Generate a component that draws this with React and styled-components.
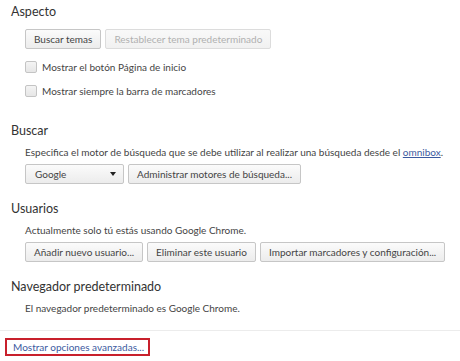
import React from "react";
import styled, { createGlobalStyle } from "styled-components";

const Global = createGlobalStyle`
  html, body { margin: 0; padding: 0; background: #ffffff; }
  body { font-family: Lato, "Open Sans", "Liberation Sans", sans-serif; color: #444; }
`;

const Page = styled.div`
  width: 460px;
  height: 361px;
  overflow: hidden;
  padding-top: 3px;
  box-sizing: border-box;
  display: flex;
  flex-direction: column;
`;

const Section = styled.section`
  padding-left: 11px;
  display: flex;
  flex-direction: column;
  margin-bottom: ${(p) => p.$gap ?? 16}px;
`;

const Title = styled.h3`
  margin: 0;
  font-size: 12.5px;
  font-weight: 400;
  line-height: 18px;
  color: #333;
`;

const Body = styled.div`
  padding-left: 14px;
  display: flex;
  flex-direction: column;
  gap: 3px;
  margin-top: ${(p) => p.$top ?? 3}px;
`;

const Text = styled.div`
  font-size: 10px;
  line-height: 18px;
  color: #444;
  white-space: nowrap;
`;

const Link = styled.a`
  color: #3b5aa0;
  text-decoration: underline;
`;

const Row = styled.div`
  display: flex;
  gap: 4px;
`;

const Button = styled.button`
  height: 20px;
  box-sizing: border-box;
  padding: 0 ${(p) => p.$pad ?? 8}px;
  font-family: inherit;
  font-size: 10px;
  line-height: 18px;
  border-radius: 2px;
  border: 1px solid ${(p) => (p.disabled ? "#dcdcdc" : "#c6c6c6")};
  color: ${(p) => (p.disabled ? "#b0b0b0" : "#444")};
  background: ${(p) =>
    p.disabled
      ? "linear-gradient(#f9f9f9, #f1f1f1)"
      : "linear-gradient(#fbfbfb, #ececec)"};
  white-space: nowrap;
`;

const Select = styled.div`
  width: 99px;
  height: 20px;
  box-sizing: border-box;
  border-radius: 2px;
  border: 1px solid #c6c6c6;
  background: linear-gradient(#fbfbfb, #ececec);
  font-size: 10px;
  line-height: 18px;
  color: #444;
  padding: 0 7px 0 9px;
  display: flex;
  align-items: center;
  justify-content: space-between;
`;

const Arrow = styled.span`
  width: 0;
  height: 0;
  border-left: 3.5px solid transparent;
  border-right: 3.5px solid transparent;
  border-top: 4px solid #222;
`;

const CheckList = styled.div`
  display: flex;
  flex-direction: column;
  margin-top: 3px;
`;

const CheckRow = styled.label`
  display: flex;
  align-items: center;
  height: 24px;
  gap: 5px;
  font-size: 10px;
  color: #444;
`;

const Box = styled.span`
  width: 12px;
  height: 12px;
  box-sizing: border-box;
  border: 1px solid #c4c4c4;
  border-radius: 2px;
  background: linear-gradient(#f4f4f4, #e6e6e6);
`;

const Separator = styled.hr`
  margin: 0;
  border: 0;
  border-top: 1px solid #ececec;
  width: 100%;
`;

const Footer = styled.div`
  padding: 7px 0 0 5px;
  display: flex;
`;

const Advanced = styled.a`
  font-size: 10px;
  line-height: 14px;
  color: #3b5aa0;
  border: 2px solid #c8202c;
  padding: 0 4px 0 6px;
  white-space: nowrap;
`;

export default function App() {
  return (
    <>
      <Global />
      <Page>
        <Section $gap={19}>
          <Title>Aspecto</Title>
          <Body $top={8}>
            <Row>
              <Button>Buscar temas</Button>
              <Button disabled>Restablecer tema predeterminado</Button>
            </Row>
            <CheckList>
              <CheckRow>
                <Box />
                Mostrar el botón Página de inicio
              </CheckRow>
              <CheckRow>
                <Box />
                Mostrar siempre la barra de marcadores
              </CheckRow>
            </CheckList>
          </Body>
        </Section>

        <Section>
          <Title>Buscar</Title>
          <Body>
            <Text>
              Especifica el motor de búsqueda que se debe utilizar al realizar una
              búsqueda desde el <Link>omnibox</Link>.
            </Text>
            <Row>
              <Select>
                Google
                <Arrow />
              </Select>
              <Button>Administrar motores de búsqueda...</Button>
            </Row>
          </Body>
        </Section>

        <Section>
          <Title>Usuarios</Title>
          <Body>
            <Text>Actualmente solo tú estás usando Google Chrome.</Text>
            <Row>
              <Button>Añadir nuevo usuario...</Button>
              <Button>Eliminar este usuario</Button>
              <Button>Importar marcadores y configuración...</Button>
            </Row>
          </Body>
        </Section>

        <Section $gap={13}>
          <Title>Navegador predeterminado</Title>
          <Body>
            <Text>El navegador predeterminado es Google Chrome.</Text>
          </Body>
        </Section>

        <Separator />
        <Footer>
          <Advanced>Mostrar opciones avanzadas...</Advanced>
        </Footer>
      </Page>
    </>
  );
}
